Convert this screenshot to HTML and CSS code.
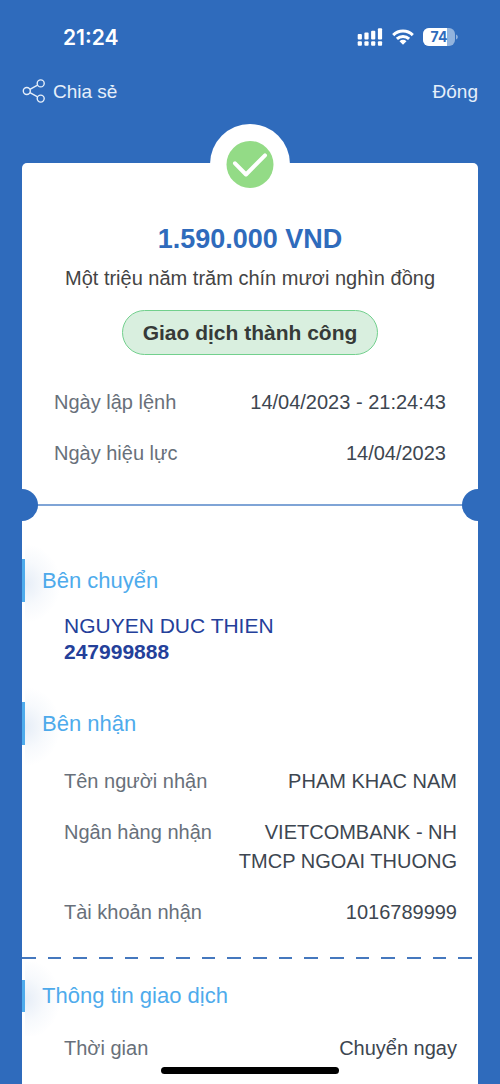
FILE: index.html
```html
<!DOCTYPE html>
<html lang="vi">
<head>
<meta charset="utf-8">
<meta name="viewport" content="width=device-width, initial-scale=1">
<title>Giao dịch thành công</title>
<link rel="stylesheet" href="styles.css">
</head>
<body>
<div class="status-bar">
  <span class="clock">21:24</span>
  <div class="status-icons">
    <svg width="26" height="18" viewBox="0 0 26 18" fill="#fff" aria-hidden="true">
      <rect x="0.7" y="6" width="4.2" height="5.5" rx="1"/>
      <rect x="7.4" y="4.4" width="4.2" height="7.1" rx="1"/>
      <rect x="14.1" y="2.7" width="4.2" height="8.8" rx="1"/>
      <rect x="20.9" y="0.2" width="4.2" height="11.3" rx="1"/>
      <rect x="0.7" y="13.2" width="4.2" height="4.6" rx="1"/>
      <rect x="7.4" y="13.2" width="4.2" height="4.6" rx="1"/>
      <rect x="14.1" y="13.2" width="4.2" height="4.6" rx="1"/>
      <rect x="20.9" y="13.2" width="4.2" height="4.6" rx="1"/>
    </svg>
    <svg width="22" height="16" viewBox="0 0 22 16" aria-hidden="true">
      <g fill="none" stroke="#fff" stroke-width="3">
        <path d="M1.2 6.1a14 14 0 0 1 19.6 0"/>
        <path d="M4.9 9.9a8.8 8.8 0 0 1 12.2 0"/>
      </g>
      <path fill="#fff" d="M11 15.8l-3.5-3.5a5 5 0 0 1 7 0z"/>
    </svg>
    <svg class="battery" width="36" height="18" viewBox="0 0 36 18" role="img" aria-label="74%">
      <clipPath id="cell"><rect width="32" height="18" rx="6"/></clipPath>
      <g clip-path="url(#cell)">
        <rect width="32" height="18" fill="#92b3dd"/>
        <rect width="24" height="18" fill="#fff"/>
      </g>
      <path d="M33 6.5c2.4 1 2.4 4 0 5z" fill="#92b3dd"/>
      <text x="16" y="14" text-anchor="middle" class="battery-level">74</text>
    </svg>
  </div>
</div>

<header class="nav">
  <button class="nav-button" type="button">
    <svg width="23" height="24" viewBox="0 0 23 24" fill="none" stroke="#e6effa" stroke-width="1.4" aria-hidden="true">
      <circle cx="4.8" cy="12" r="3.5"/>
      <circle cx="18.7" cy="4.4" r="3.5"/>
      <circle cx="18.7" cy="19.6" r="3.5"/>
      <path d="M7.9 10.3l7.7-4.2M7.9 13.7l7.7 4.2"/>
    </svg>
    Chia sẻ
  </button>
  <button class="nav-button" type="button">Đóng</button>
</header>

<main class="receipt">
  <svg class="badge" width="80" height="80" viewBox="0 0 80 80" aria-hidden="true">
    <circle cx="40" cy="40" r="40" fill="#fff"/>
    <circle cx="40" cy="40.5" r="23.5" fill="#93db86"/>
    <path d="M25 39.3l11 11.2 19-19.2" fill="none" stroke="#fff" stroke-width="4" stroke-linecap="round" stroke-linejoin="round"/>
  </svg>

  <section class="summary">
    <h1 class="amount">1.590.000 VND</h1>
    <p class="amount-words">Một triệu năm trăm chín mươi nghìn đồng</p>
    <p class="status-pill">Giao dịch thành công</p>
  </section>

  <dl class="rows dates">
    <div class="row"><dt>Ngày lập lệnh</dt><dd>14/04/2023 - 21:24:43</dd></div>
    <div class="row"><dt>Ngày hiệu lực</dt><dd>14/04/2023</dd></div>
  </dl>

  <div class="tear"></div>

  <section class="sender">
    <h2 class="section-title">Bên chuyển</h2>
    <p class="account">NGUYEN DUC THIEN<br><strong>247999888</strong></p>
  </section>

  <section class="receiver">
    <h2 class="section-title">Bên nhận</h2>
    <dl class="rows details">
      <div class="row"><dt>Tên người nhận</dt><dd>PHAM KHAC NAM</dd></div>
      <div class="row"><dt>Ngân hàng nhận</dt><dd>VIETCOMBANK - NH TMCP NGOAI THUONG</dd></div>
      <div class="row"><dt>Tài khoản nhận</dt><dd>1016789999</dd></div>
    </dl>
  </section>

  <svg class="dashes" aria-hidden="true"><line x1="0" y1="1" x2="100%" y2="1"/></svg>

  <section class="info">
    <h2 class="section-title section-title-short">Thông tin giao dịch</h2>
    <dl class="rows details">
      <div class="row"><dt>Thời gian</dt><dd>Chuyển ngay</dd></div>
    </dl>
  </section>
</main>
<div class="home-indicator"></div>
</body>
</html>
```

FILE: styles.css
```css
:root {
  --blue: #2f6bbc;
  --sky: #4eabec;
}

* {
  box-sizing: border-box;
}

body {
  margin: 0;
  min-height: 100vh;
  display: flex;
  flex-direction: column;
  background: var(--blue);
  font-family: "Liberation Sans", Arial, sans-serif;
  font-size: 20px;
  line-height: 29px;
}

h1, h2, p, dl, dd {
  margin: 0;
}

.status-bar {
  display: flex;
  align-items: center;
  justify-content: space-between;
  height: 74px;
  padding: 0 41px 0 63px;
}

.clock {
  color: #fff;
  font-family: Inter, sans-serif;
  font-size: 21px;
  font-weight: 600;
}

.status-icons {
  display: flex;
  align-items: center;
  gap: 9px;
}

.battery-level {
  fill: var(--blue);
  font: 700 14px Inter, sans-serif;
}

.nav {
  display: flex;
  align-items: center;
  justify-content: space-between;
  height: 34px;
  padding: 0 22px;
}

.nav-button {
  display: flex;
  align-items: center;
  gap: 8px;
  padding: 0;
  border: 0;
  background: none;
  color: #e6effa;
  font: inherit;
  font-size: 19px;
  cursor: pointer;
}

.receipt {
  position: relative;
  flex: 1;
  margin: 55px 22px 0;
  padding: 60px 0 20px;
  border-radius: 5px 5px 0 0;
  background: #fff;
}

.badge {
  position: absolute;
  top: -39px;
  left: calc(50% - 40px);
}

.summary {
  display: flex;
  flex-direction: column;
  align-items: center;
  text-align: center;
}

.amount {
  color: var(--blue);
  font-size: 27px;
  line-height: 32px;
}

.amount-words {
  margin-top: 11px;
  color: #444;
  line-height: 24px;
}

.status-pill {
  margin-top: 20px;
  padding: 8px 20px;
  border: 1px solid #72d08d;
  border-radius: 24px;
  background: #d9efdf;
  color: #363a38;
  font-size: 21px;
  font-weight: 700;
  line-height: 27px;
}

.rows {
  display: flex;
  flex-direction: column;
  gap: 22px;
}

.row {
  display: flex;
  justify-content: space-between;
  gap: 24px;
}

.row dt {
  flex: none;
  color: #68707a;
}

.row dd {
  color: #3d4650;
  text-align: right;
}

.dates {
  margin-top: 33px;
  padding: 0 32px;
}

.details {
  margin-top: 22px;
  padding: 0 21px 0 42px;
}

.tear {
  position: relative;
  height: 2px;
  margin-top: 36px;
  background: #7fa4d6;
}

.tear::before,
.tear::after {
  content: "";
  position: absolute;
  top: -15px;
  width: 16px;
  height: 32px;
  background: var(--blue);
}

.tear::before {
  left: 0;
  border-radius: 0 16px 16px 0;
}

.tear::after {
  right: 0;
  border-radius: 16px 0 0 16px;
}

.section-title {
  position: relative;
  padding-left: 20px;
  background: linear-gradient(var(--sky), var(--sky)) left / 3px 100% no-repeat;
  color: var(--sky);
  font-size: 22px;
  font-weight: 400;
  line-height: 43px;
}

.section-title::before {
  content: "";
  position: absolute;
  top: -18px;
  bottom: -24px;
  left: 3px;
  width: 36px;
  background: radial-gradient(ellipse closest-side at 0 50%, rgba(47, 90, 188, 0.12), rgba(47, 90, 188, 0.05) 50%, rgba(47, 90, 188, 0)), radial-gradient(36px 40px at 0 50%, rgba(47, 107, 188, 0.12), rgba(47, 107, 188, 0.04) 55%, rgba(47, 107, 188, 0));
}

.section-title-short {
  line-height: 32px;
}

.sender {
  margin-top: 53px;
}

.account {
  margin-top: 11px;
  padding-left: 42px;
  color: #24409a;
  font-size: 21px;
  line-height: 26px;
}

.receiver {
  margin-top: 37px;
}

.dashes {
  display: block;
  width: 100%;
  height: 2px;
  margin-top: 30px;
}

.dashes line {
  stroke: #4578be;
  stroke-width: 2;
  stroke-dasharray: 14 12 13 12 14 12;
}

.info {
  margin-top: 21px;
}

.home-indicator {
  position: fixed;
  bottom: 10px;
  left: calc(50% - 89px);
  width: 178px;
  height: 7px;
  border-radius: 4px;
  background: #000;
}
```
